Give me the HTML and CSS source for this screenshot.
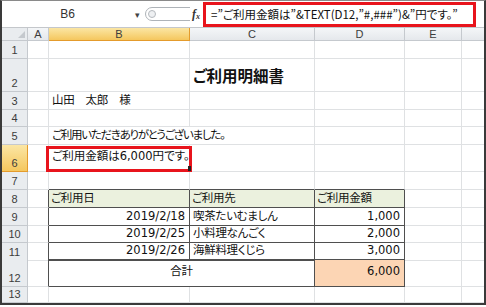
FILE: index.html
```html
<!DOCTYPE html>
<html lang="ja">
<head>
  <meta charset="UTF-8" />
  <title>ご利用明細書</title>
  <link rel="stylesheet" href="styles.css">
</head>
<body>
  <div class="window">
    <div class="formula-bar">
      <div class="name-box">B6</div>
      <span class="name-arrow">&#9662;</span>
      <span class="splitter">
        <svg width="47" height="16" viewBox="0 0 47 16">
          <path d="M47 1.5 H9 A6.5 6.5 0 0 0 9 14.5 H47" fill="none" stroke="#aeb3b8" />
          <circle cx="9" cy="8" r="3.5" fill="#eef0f2" stroke="#b5b9be" />
        </svg>
      </span>
      <span class="fx">f<sub>x</sub></span>
      <div class="formula">=”ご利用金額は”&amp;TEXT(D12,”#,###”)&amp;”円です。”</div>
    </div>

    <div class="sheet">
      <div class="row head">
        <div class="rh corner"><span class="corner-mark"></span></div>
        <div class="ch">A</div><div class="ch active">B</div><div class="ch">C</div><div class="ch">D</div><div class="ch">E</div><div class="ch last"></div>
      </div>
      <div class="row h18"><div class="rh">1</div><div class="c"></div><div class="c"></div><div class="c"></div><div class="c"></div><div class="c"></div><div class="c last"></div></div>
      <div class="row h33"><div class="rh">2</div><div class="c"></div><div class="c"></div><div class="c title">ご利用明細書</div><div class="c"></div><div class="c"></div><div class="c last"></div></div>
      <div class="row h18"><div class="rh">3</div><div class="c"></div><div class="c">山田　太郎　様</div><div class="c"></div><div class="c"></div><div class="c"></div><div class="c last"></div></div>
      <div class="row h17"><div class="rh">4</div><div class="c"></div><div class="c"></div><div class="c"></div><div class="c"></div><div class="c"></div><div class="c last"></div></div>
      <div class="row h18"><div class="rh">5</div><div class="c"></div><div class="c spill tight">ご利用いただきありがとうございました。</div><div class="c"></div><div class="c"></div><div class="c"></div><div class="c last"></div></div>
      <div class="row h27"><div class="rh active">6</div><div class="c"></div><div class="c picked">ご利用金額は6,000円です。<span class="mark"></span></div><div class="c"></div><div class="c"></div><div class="c"></div><div class="c last"></div></div>
      <div class="row h18"><div class="rh">7</div><div class="c"></div><div class="c top"></div><div class="c top"></div><div class="c top"></div><div class="c"></div><div class="c last"></div></div>
      <div class="row h18"><div class="rh">8</div><div class="c edge"></div><div class="c box label">ご利用日</div><div class="c box label">ご利用先</div><div class="c box label">ご利用金額</div><div class="c"></div><div class="c last"></div></div>
      <div class="row h18"><div class="rh">9</div><div class="c edge"></div><div class="c box num">2019/2/18</div><div class="c box">喫茶たいむましん</div><div class="c box num">1,000</div><div class="c"></div><div class="c last"></div></div>
      <div class="row h17"><div class="rh">10</div><div class="c edge"></div><div class="c box num">2019/2/25</div><div class="c box">小料理なんごく</div><div class="c box num">2,000</div><div class="c"></div><div class="c last"></div></div>
      <div class="row h17"><div class="rh">11</div><div class="c edge"></div><div class="c box num split">2019/2/26</div><div class="c box split">海鮮料理くじら</div><div class="c box num split">3,000</div><div class="c"></div><div class="c last"></div></div>
      <div class="row h27"><div class="rh">12</div><div class="c edge"></div><div class="c box merge center">合計</div><div class="c box num sum">6,000</div><div class="c"></div><div class="c last"></div></div>
      <div class="row h16"><div class="rh">13</div><div class="c"></div><div class="c"></div><div class="c"></div><div class="c"></div><div class="c"></div><div class="c last"></div></div>
    </div>
  </div>
</body>
</html>
```

FILE: styles.css
```css
body {
  margin: 0;
  background: #fff;
  font-family: "Noto Sans CJK JP", "Liberation Sans", sans-serif;
  color: #111;
}
.window {
  width: 486px;
  height: 305px;
  box-sizing: border-box;
  border: 2px solid #3a3a3a;
  border-top: 1px solid #8a8a8a;
  overflow: hidden;
  background: #fff;
}

/* formula bar */
.formula-bar {
  display: flex;
  align-items: center;
  height: 27px;
  box-sizing: border-box;
  border-bottom: 1px solid #c4c7cb;
}
.name-box {
  width: 131px;
  text-align: center;
  font-family: "Liberation Sans", sans-serif;
  font-size: 12px;
  color: #333;
}
.name-arrow {
  width: 8px;
  font-size: 9px;
  color: #444;
  text-align: center;
}
.splitter {
  display: flex;
  margin-left: 2px;
  width: 47px;
}
.fx {
  width: 11px;
  margin-left: 2px;
  font-family: "Liberation Serif", serif;
  font-style: italic;
  font-weight: bold;
  font-size: 12px;
  color: #333;
}
.fx sub {
  font-size: 8px;
  vertical-align: -1px;
}
.formula {
  align-self: stretch;
  margin-top: 1px;
  width: 273px;
  box-sizing: border-box;
  border: 3px solid #e8141c;
  padding-left: 5px;
  font-size: 11.5px;
  line-height: 18px;
  white-space: nowrap;
  overflow: hidden;
  font-feature-settings: "palt";
}

/* sheet grid */
.row {
  display: grid;
  grid-template-columns: 26px 21px 141px 125px 90px 57px 22px;
}
.row > div {
  box-sizing: border-box;
  border-right: 1px solid #dfe1e3;
  border-bottom: 1px solid #dfe1e3;
}
.row > .last {
  border-right: 0;
}
.head { height: 13px; }
.h16 { height: 16px; }
.h17 { height: 17px; }
.h18 { height: 18px; }
.h27 { height: 27px; }
.h33 { height: 33px; }

.rh,
.ch {
  display: flex;
  justify-content: center;
  font-family: "Liberation Sans", sans-serif;
  font-size: 11px;
  color: #3c3c3c;
}
.row > .rh {
  align-items: flex-end;
  line-height: 13px;
  padding-bottom: 1px;
  background: #e9ecef;
  border-color: #c5c9ce;
}
.row > .ch {
  align-items: center;
  line-height: 12px;
  background: linear-gradient(#f4f6f8, #e5e8ec);
  border-color: #c5c9ce;
}
.row > .active {
  background: linear-gradient(#fbe6a4, #f5c75e);
  border-color: #e49b2c;
}
.corner {
  position: relative;
}
.corner-mark {
  position: absolute;
  right: 2px;
  bottom: 2px;
  border-style: solid;
  border-width: 0 0 7px 7px;
  border-color: transparent transparent #c5c9ce transparent;
}

/* cells */
.c {
  display: flex;
  align-items: flex-end;
  padding: 0 3px 1px;
  font-family: "DejaVu Sans", "Noto Sans CJK JP", sans-serif;
  font-size: 11.5px;
  line-height: 15px;
  letter-spacing: -0.3px;
  font-feature-settings: "palt";
  white-space: nowrap;
}
.h27 .c {
  padding-bottom: 7px;
}
.title {
  font-family: "Noto Sans CJK JP", sans-serif;
  font-size: 15.5px;
  font-weight: bold;
  letter-spacing: 0;
  line-height: 18px;
  padding-bottom: 7px;
}
.row > .spill {
  border-right-color: transparent;
}
.tight {
  letter-spacing: -1.3px;
}
.num {
  justify-content: flex-end;
  padding-right: 4px;
  letter-spacing: 0;
}
.center {
  justify-content: center;
}

/* B6 with the highlight frame */
.picked {
  position: relative;
  letter-spacing: 0;
}
.picked::before {
  content: "";
  position: absolute;
  left: -3px;
  right: -3px;
  top: 1px;
  bottom: -1px;
  border: 3px solid #e8141c;
}
.mark {
  position: absolute;
  right: -2px;
  bottom: 0;
  width: 3px;
  height: 5px;
  background: #222;
}

/* list B8:D12 */
.row > .top {
  border-bottom-color: #4f4f4f;
}
.row > .edge {
  border-right-color: #4f4f4f;
}
.row > .box {
  border-color: #4f4f4f;
}
.label {
  background: #ebf1de;
  padding-left: 2px;
}
.row > .split {
  border-bottom-width: 2px;
}
.merge {
  grid-column: span 2;
}
.sum {
  background: #fcd5b4;
}
```
